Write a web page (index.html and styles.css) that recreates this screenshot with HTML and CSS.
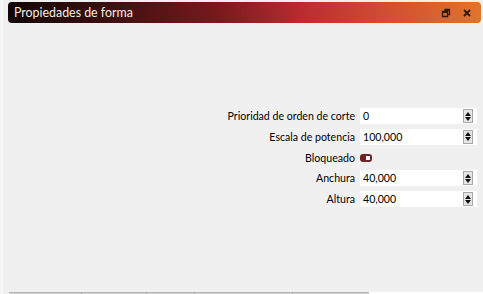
FILE: index.html
```html
<!DOCTYPE html>
<html lang="es">
<head>
  <meta charset="UTF-8">
  <title>Propiedades de forma</title>
  <link rel="stylesheet" href="styles.css">
</head>
<body>
  <div id="panel">
    <div class="titlebar">
      <span class="title">Propiedades de forma</span>
      <span class="tbtn">
        <svg width="10" height="10" viewBox="0 0 10 10"><path d="M3.5 1.5h5v5h-2M1.5 3.5h5v5h-5z" fill="none" stroke="#2a1a10" stroke-width="1.3"/><path d="M3.5 1.5h5v1.5h-5zM1.5 3.5h5v1.5h-5z" fill="#2a1a10"/></svg>
      </span>
      <span class="tbtn">
        <svg width="10" height="10" viewBox="0 0 10 10"><path d="M2 2l6 6M8 2l-6 6" stroke="#2a1a10" stroke-width="1.8"/></svg>
      </span>
    </div>
    <div class="content">
      <div class="form">
        <label>Prioridad de orden de corte</label>
        <div class="field"><span class="val">0</span><span class="spin"><i class="up"></i><i class="down"></i></span></div>
        <label>Escala de potencia</label>
        <div class="field"><span class="val">100,000</span><span class="spin"><i class="up"></i><i class="down"></i></span></div>
        <label>Bloqueado</label>
        <div class="check"><span class="toggle"></span></div>
        <label>Anchura</label>
        <div class="field"><span class="val">40,000</span><span class="spin"><i class="up"></i><i class="down"></i></span></div>
        <label>Altura</label>
        <div class="field"><span class="val">40,000</span><span class="spin"><i class="up"></i><i class="down"></i></span></div>
      </div>
    </div>
    <div class="footer">
      <div class="tabs">
        <span style="width:73px"></span>
        <span style="width:65px"></span>
        <span style="width:48px"></span>
        <span style="width:98px"></span>
        <span></span>
      </div>
      <div class="blank"></div>
    </div>
  </div>
</body>
</html>
```
FILE: styles.css
```css
* {
  margin: 0;
  padding: 0;
  box-sizing: border-box;
}
body {
  width: 483px;
  height: 294px;
  overflow: hidden;
  background: #f0f0f0;
  font-family: Lato, "Noto Sans", sans-serif;
  font-size: 10.6px;
  color: #000;
}
#panel {
  height: 294px;
  display: flex;
  flex-direction: column;
  border-left: 3px solid #f7f7f7;
}
.titlebar {
  margin: 2px 2px 0 5px;
  height: 21px;
  border-radius: 4px;
  background: linear-gradient(to right, #120606 0%, #3a0e0f 20%, #7a1a1d 45%, #b92c30 62%, #cf4a33 78%, #e0742c 100%);
  display: flex;
  align-items: center;
  padding: 0 6px 0 6px;
}
.title {
  flex: 1;
  color: #f4ece6;
  font-size: 12.4px;
}
.tbtn {
  width: 16px;
  height: 14px;
  display: flex;
  align-items: center;
  justify-content: center;
  margin-left: 5px;
}
.content {
  flex: 1;
  display: flex;
  justify-content: flex-end;
  padding: 85px 6px 0 0;
}
.form {
  display: grid;
  grid-template-columns: auto 117px;
  column-gap: 5px;
  row-gap: 4.75px;
  align-items: center;
  align-content: start;
}
.form label {
  text-align: right;
  line-height: 16px;
}
.field {
  height: 16px;
  background: #fff;
  display: flex;
  align-items: center;
  padding-left: 3px;
}
.val {
  flex: 1;
}
.spin {
  width: 10px;
  height: 14px;
  margin-right: 4px;
  border: 1px solid #a9a9a9;
  background: #e6e6e6;
  display: flex;
  flex-direction: column;
  align-items: center;
  justify-content: center;
  gap: 1px;
}
.spin i {
  display: block;
  width: 0;
  height: 0;
  border-left: 3px solid transparent;
  border-right: 3px solid transparent;
}
.spin .up {
  border-bottom: 4px solid #111;
}
.spin .down {
  border-top: 4px solid #111;
}
.check {
  height: 16px;
  display: flex;
  align-items: center;
}
.toggle {
  width: 12px;
  height: 8px;
  border-radius: 3px;
  background: #6b2326;
  position: relative;
}
.toggle::after {
  content: "";
  position: absolute;
  right: 2px;
  top: 2px;
  width: 4px;
  height: 4px;
  background: #fff;
}
.footer {
  height: 22px;
  display: flex;
  align-items: flex-end;
}
.tabs {
  margin-left: 6px;
  width: 360px;
  height: 2px;
  display: flex;
  background: #d0d0d0;
  border-top: 1px solid #b4b4b4;
}
.tabs span {
  border-right: 1px solid #a0a0a0;
}
.tabs span:last-child {
  flex: 1;
  border-right: 0;
}
.blank {
  flex: 1;
  height: 2px;
  background: #fff;
}
```
